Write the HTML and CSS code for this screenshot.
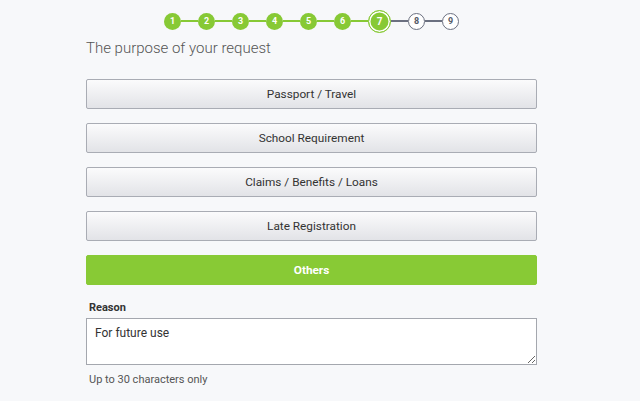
FILE: index.html
```html
<!DOCTYPE html>
<html>
<head>
<meta charset="utf-8">
<link rel="stylesheet" href="styles.css">
</head>
<body>
<div class="page">
  <div class="stepper">
    <span class="step done">1</span><span class="line done"></span>
    <span class="step done">2</span><span class="line done"></span>
    <span class="step done">3</span><span class="line done"></span>
    <span class="step done">4</span><span class="line done"></span>
    <span class="step done">5</span><span class="line done"></span>
    <span class="step done">6</span><span class="line done"></span>
    <span class="step current">7</span><span class="line"></span>
    <span class="step todo">8</span><span class="line"></span>
    <span class="step todo">9</span>
  </div>
  <h1 class="title">The purpose of your request</h1>
  <div class="options">
    <button class="option">Passport / Travel</button>
    <button class="option">School Requirement</button>
    <button class="option">Claims / Benefits / Loans</button>
    <button class="option">Late Registration</button>
    <button class="option selected">Others</button>
  </div>
  <label class="label" for="reason">Reason</label>
  <textarea id="reason" class="reason">For future use</textarea>
  <p class="help">Up to 30 characters only</p>
</div>
</body>
</html>
```
FILE: styles.css
```css
html, body {
  margin: 0;
  padding: 0;
  background: #f7f8fa;
  font-family: Roboto, "Liberation Sans", Arial, sans-serif;
  color: #333;
}
.page {
  width: 451px;
  margin-left: 86px;
  padding-top: 9px;
}
.stepper {
  display: flex;
  align-items: center;
  justify-content: center;
  height: 24px;
}
.step {
  display: flex;
  align-items: center;
  justify-content: center;
  box-sizing: border-box;
  width: 17px;
  height: 17px;
  border-radius: 50%;
  font-size: 9px;
  font-weight: 700;
}
.step.done {
  background: #87c935;
  color: #fff;
}
.step.current {
  width: 23px;
  height: 23px;
  background: #87c935;
  color: #fff;
  border: 1.5px solid #87c935;
  box-shadow: inset 0 0 0 1.5px #fff;
  font-size: 10px;
}
.step.todo {
  width: 17px;
  height: 17px;
  background: #fff;
  border: 1.5px solid #6b7080;
  color: #555a66;
  font-size: 9px;
}
.line {
  width: 17px;
  height: 2px;
  background: #6b7080;
}
.line.done {
  background: #87c935;
}
.title {
  margin: 5px 0 0;
  font-size: 15px;
  line-height: 20px;
  font-weight: 300;
  color: #555;
}
.options {
  display: flex;
  flex-direction: column;
  gap: 14px;
  margin-top: 21px;
}
.option {
  height: 30px;
  box-sizing: border-box;
  border: 1px solid #a9acb4;
  border-radius: 2px;
  background: linear-gradient(#fbfbfc, #e2e3e7);
  font-family: inherit;
  font-size: 11.8px;
  color: #333;
  padding: 0;
}
.option.selected {
  background: #88ca35;
  border-color: #88ca35;
  color: #fff;
  font-weight: 700;
}
.label {
  display: block;
  margin-top: 15px;
  padding-left: 3px;
  font-size: 11px;
  line-height: 16px;
  font-weight: 700;
  color: #333;
}
.reason {
  display: block;
  box-sizing: border-box;
  width: 451px;
  height: 47px;
  margin-top: 2px;
  border: 1px solid #a4a7ae;
  border-radius: 0;
  background: #fff;
  padding: 7px 8px;
  font-family: inherit;
  font-size: 12px;
  color: #333;
  resize: vertical;
}
.help {
  margin: 7px 0 0;
  padding-left: 3px;
  font-size: 11px;
  line-height: 16px;
  color: #555;
}
```
